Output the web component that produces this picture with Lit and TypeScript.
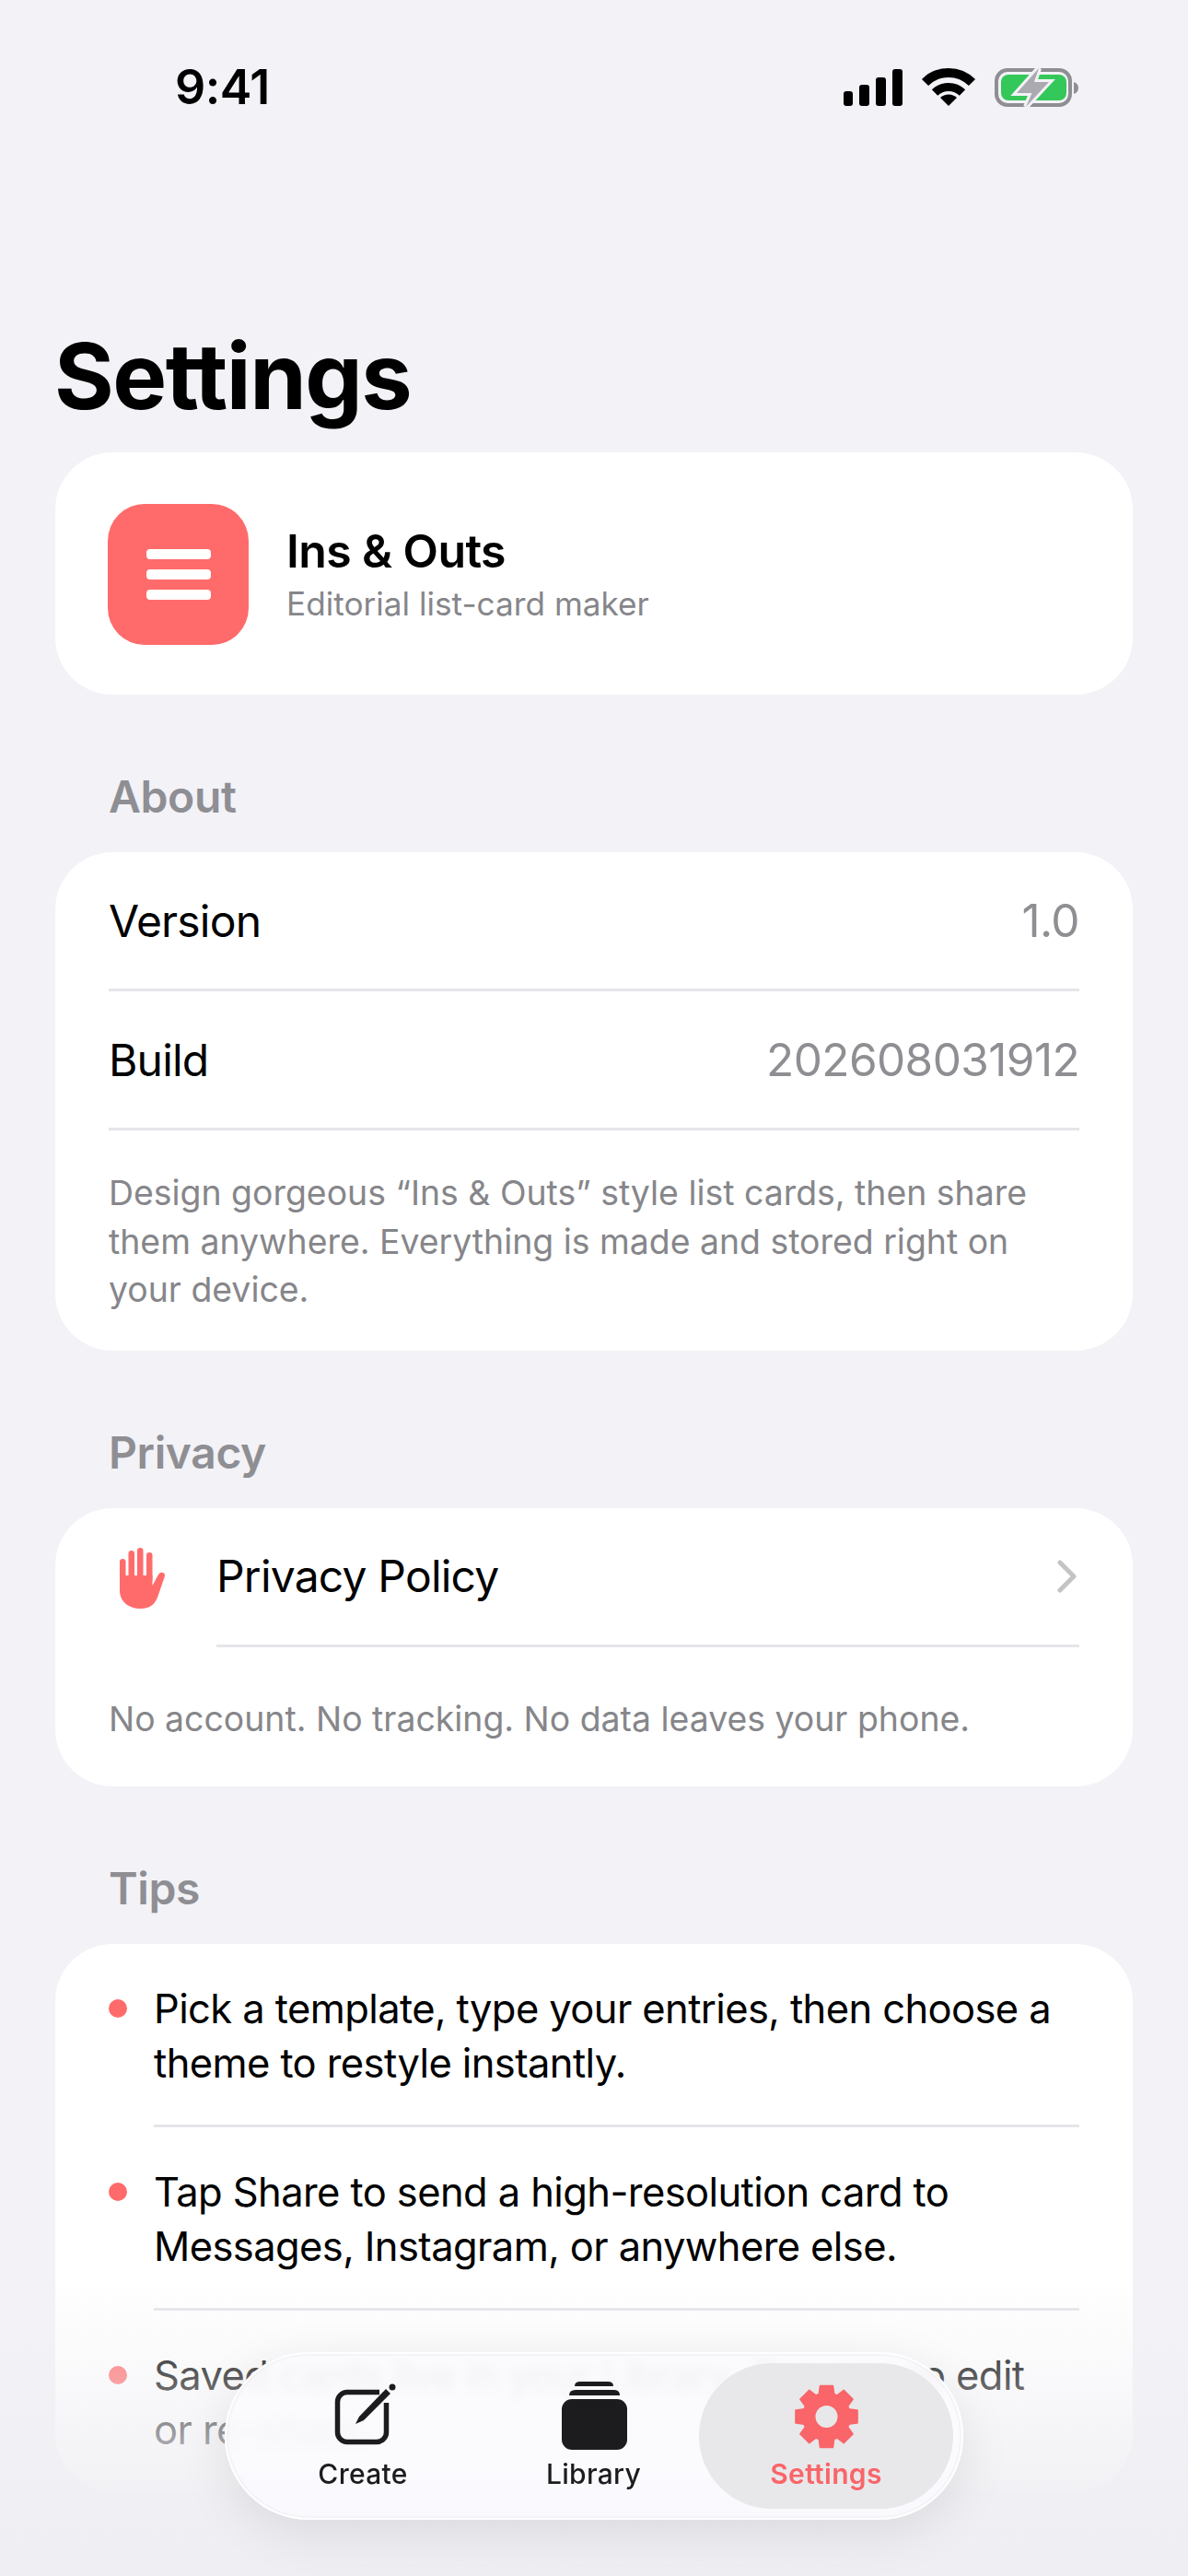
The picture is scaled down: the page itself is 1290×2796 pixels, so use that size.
import { LitElement, html, css, svg } from 'lit';
import { customElement } from 'lit/decorators.js';

const gearPath = () => {
  const cx = 35.5;
  const cy = 38;
  const pts: string[] = [];
  for (let i = 0; i < 8; i++) {
    const a = (i * Math.PI) / 4 - Math.PI / 2;
    const step = [
      [-0.32, 25.5],
      [-0.2, 34],
      [0.2, 34],
      [0.32, 25.5],
    ];
    for (const [d, r] of step) {
      pts.push(`${(cx + r * Math.cos(a + d)).toFixed(2)} ${(cy + r * Math.sin(a + d)).toFixed(2)}`);
    }
  }
  return `M${pts.join('L')}Z M${cx - 13} ${cy}a13 13 0 1 0 26 0a13 13 0 1 0 -26 0Z`;
};

@customElement('app-root')
export class AppRoot extends LitElement {
  static styles = css`
    :host {
      display: block;
      position: relative;
      width: 1290px;
      height: 2796px;
      overflow: hidden;
      background: #f2f2f7;
      font-family: Inter, 'Liberation Sans', sans-serif;
      color: #000;
    }
    .status {
      display: flex;
      justify-content: space-between;
      align-items: center;
      height: 190px;
      padding: 0 115px 0 190px;
      box-sizing: border-box;
    }
    .time {
      font-size: 52px;
      font-weight: 600;
      letter-spacing: -0.5px;
      line-height: 60px;
    }
    .content {
      padding: 0 60px;
    }
    h1 {
      margin: 0 0 21px -1px;
      padding-top: 158px;
      padding-bottom: 2px;
      font-size: 99px;
      font-weight: 700;
      line-height: 120px;
      letter-spacing: -1.5px;
    }
    .card {
      background: #fff;
      border-radius: 62px;
    }
    .brand {
      display: flex;
      align-items: center;
      gap: 41px;
      height: 263px;
      padding-left: 57px;
    }
    .logo {
      width: 153px;
      height: 153px;
      margin-top: 1px;
      border-radius: 40px;
      background: #ff6b6b;
      display: flex;
      flex-direction: column;
      justify-content: center;
      align-items: center;
      gap: 11px;
    }
    .logo i {
      display: block;
      width: 70px;
      height: 11px;
      border-radius: 4px;
      background: #fff;
    }
    .name {
      font-size: 50px;
      font-weight: 600;
      line-height: 60px;
      letter-spacing: -0.6px;
    }
    .tag {
      font-size: 35.2px;
      line-height: 46px;
      color: #86868a;
      margin-top: 4px;
    }
    h2 {
      margin: 0;
      padding: 81px 58px 30px;
      font-size: 48px;
      font-weight: 600;
      line-height: 60px;
      letter-spacing: -0.4px;
      color: #8e8e93;
    }
    .row {
      display: flex;
      justify-content: space-between;
      align-items: center;
      margin-left: 58px;
      margin-right: 58px;
      height: 151px;
      border-bottom: 3px solid #e5e5ea;
      box-sizing: border-box;
      font-size: 48px;
      letter-spacing: -0.8px;
    }
    .row .val {
      font-size: 49.5px;
      letter-spacing: -0.6px;
      color: #8e8e93;
    }
    .policy {
      display: flex;
      align-items: flex-start;
      padding-left: 70px;
    }
    .policy svg.hand {
      width: 49px;
      height: 66px;
      margin-top: 43px;
      flex: none;
    }
    .policy .row {
      flex: 1;
      margin-left: 56px;
    }
    .note {
      padding: 42px 58px 39px;
      font-size: 37.4px;
      line-height: 52.5px;
      color: #86868a;
    }
    .note.single {
      padding: 52px 58px 47px;
    }
    .tip {
      display: flex;
      gap: 29px;
      padding-left: 58px;
    }
    .dot {
      flex: none;
      width: 20px;
      height: 20px;
      border-radius: 50%;
      background: #ff6b6b;
      margin-top: 60px;
    }
    .tip-body {
      flex: 1;
      margin-right: 58px;
      padding: 41px 0 38px;
      font-size: 43.5px;
      line-height: 58.5px;
      letter-spacing: -0.6px;
      border-bottom: 3px solid #e5e5ea;
    }
    .tip:last-child .tip-body {
      border-bottom: none;
    }
    .fade {
      position: absolute;
      left: 0;
      right: 0;
      top: 2470px;
      bottom: 0;
      background: linear-gradient(
        to bottom,
        rgba(240, 240, 244, 0) 0,
        rgba(240, 240, 244, 0.38) 110px,
        rgba(240, 240, 244, 0.64) 170px,
        rgba(240, 240, 244, 0.96) 245px,
        rgba(239, 239, 243, 1) 326px
      );
      pointer-events: none;
    }
    .bar {
      position: absolute;
      left: 244px;
      top: 2553px;
      width: 802px;
      height: 182px;
      box-sizing: border-box;
      border-radius: 91px;
      padding: 12px 11px 12px 25px;
      display: flex;
      background: rgba(251, 251, 254, 0.93);
      backdrop-filter: blur(6px);
      box-shadow: 0 14px 55px rgba(0, 0, 0, 0.09), inset 0 0 0 2px rgba(255, 255, 255, 0.9),
        inset 0 0 0 4px rgba(238, 238, 242, 0.5);
    }
    .tab {
      width: 250px;
      height: 158px;
      display: flex;
      flex-direction: column;
      align-items: center;
      font-size: 30px;
      font-weight: 500;
      letter-spacing: 0.3px;
      color: #1c1c1e;
    }
    .tab + .tab {
      width: 251px;
    }
    .tab svg {
      display: block;
      margin-top: 20px;
      height: 76px;
      width: 80px;
    }
    .tab span {
      line-height: 36px;
      margin-top: 6px;
    }
    .tab.on,
    .tab + .tab.on {
      width: 276px;
      margin-left: -11px;
      border-radius: 79px;
      background: #e8e8ea;
      color: #f96569;
      font-weight: 600;
    }
  `;

  render() {
    return html`
      <div class="status">
        <div class="time">9:41</div>
        <svg width="260" height="48" viewBox="915 70 260 48">
          <rect x="916" y="98" width="10" height="16" rx="3" />
          <rect x="933" y="91" width="11" height="23" rx="3" />
          <rect x="951" y="83" width="11" height="31" rx="3" />
          <rect x="969" y="74" width="11" height="40" rx="3" />
          <g fill="none" stroke="#000">
            <path d="M1004.5 88.5a36 36 0 0 1 51 0" stroke-width="10" />
            <path d="M1015 99.5a21.5 21.5 0 0 1 30 0" stroke-width="9" />
          </g>
          <path d="M1021 105a13 13 0 0 1 18 0l-9 9z" />
          <rect x="1082" y="75" width="80" height="38" rx="12" fill="none" stroke="#8e8e93" stroke-width="4" />
          <rect x="1087" y="80" width="71" height="28" rx="8" fill="#34c759" />
          <path d="M1166 88c3 1 5 3 5 6.500s-2 5.500-5 6.500z" fill="#8e8e93" />
          <path d="M1128 73l-24 27h16.500l-6.500 15 25-27h-16z" fill="#aaaab0" stroke="#f2f2f7" stroke-width="6" paint-order="stroke" />
        </svg>
      </div>
      <div class="content">
        <h1>Settings</h1>
        <div class="card brand">
          <div class="logo"><i></i><i></i><i></i></div>
          <div>
            <div class="name">Ins &amp; Outs</div>
            <div class="tag">Editorial list-card maker</div>
          </div>
        </div>

        <h2>About</h2>
        <div class="card">
          <div class="row"><span>Version</span><span class="val">1.0</span></div>
          <div class="row"><span>Build</span><span class="val">202608031912</span></div>
          <div class="note">
            Design gorgeous “Ins &amp; Outs” style list cards, then share<br />them anywhere. Everything is made and stored right on<br />your device.
          </div>
        </div>

        <h2>Privacy</h2>
        <div class="card">
          <div class="policy">
            <svg class="hand" viewBox="0 0 49 66" fill="#ff6b6b">
              <rect x="0" y="12" width="6.500" height="26" rx="3.200" />
              <rect x="9.500" y="3" width="6.500" height="34" rx="3.200" />
              <rect x="19" y="0" width="6.500" height="37" rx="3.200" />
              <rect x="29" y="5" width="6.500" height="32" rx="3.200" />
              <path d="M0 30h35.500v11l6.500-12q2-3 5-2t1.500 5l-6.500 19c-3 10-9 15-19 15c-14 0-23-8-23-20z" />
            </svg>
            <div class="row">
              <span>Privacy Policy</span>
              <svg width="26" height="36" viewBox="0 0 26 36" fill="none" stroke="#c4c4c7" stroke-width="5" stroke-linecap="round" stroke-linejoin="round">
                <path d="M5 3l15 15l-15 15" />
              </svg>
            </div>
          </div>
          <div class="note single">No account. No tracking. No data leaves your phone.</div>
        </div>

        <h2>Tips</h2>
        <div class="card">
          <div class="tip">
            <div class="dot"></div>
            <div class="tip-body">Pick a template, type your entries, then choose a<br />theme to restyle instantly.</div>
          </div>
          <div class="tip">
            <div class="dot"></div>
            <div class="tip-body">Tap Share to send a high-resolution card to<br />Messages, Instagram, or anywhere else.</div>
          </div>
          <div class="tip">
            <div class="dot"></div>
            <div class="tip-body">Saved cards live in your Library. Tap one to edit<br />or re-share.</div>
          </div>
        </div>
      </div>

      <div class="fade"></div>

      <nav class="bar">
        <div class="tab">
          <svg viewBox="0 0 80 76">
            <path d="M58 11.500H23a10.500 10.500 0 0 0-10.500 10.500V55a10.500 10.500 0 0 0 10.500 10.500H55a10.500 10.500 0 0 0 10.500-10.500V23" fill="none" stroke="#1c1c1e" stroke-width="5.500" />
            <path d="M32 46l4-8L65 8l5 5L41 42z" fill="#1c1c1e" />
            <circle cx="72" cy="6" r="3.500" fill="#1c1c1e" />
          </svg>
          <span>Create</span>
        </div>
        <div class="tab">
          <svg viewBox="0 0 80 76" fill="#1c1c1e">
            <path d="M19 5q0-5 6-5h30q6 0 6 5z" />
            <path d="M13 15q0-6 7-6h41q7 0 7 6z" />
            <rect x="5" y="19" width="71" height="55" rx="11" />
          </svg>
          <span>Library</span>
        </div>
        <div class="tab on">
          <svg viewBox="-5 0 80 76" fill="#f96569" stroke="#f96569" stroke-width="2" stroke-linejoin="round">
            ${svg`<path fill-rule="evenodd" d="${gearPath()}" />`}
          </svg>
          <span>Settings</span>
        </div>
      </nav>
    `;
  }
}
